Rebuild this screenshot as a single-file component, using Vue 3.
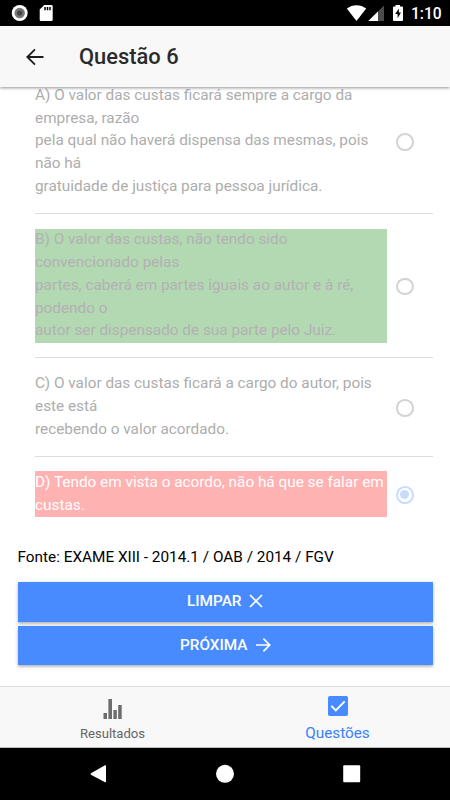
<script setup>
const options = [
  {
    id: 'a',
    text: 'A) O valor das custas ficará sempre a cargo da\nempresa, razão\npela qual não haverá dispensa das mesmas, pois\nnão há\ngratuidade de justiça para pessoa jurídica.',
  },
  {
    id: 'b',
    state: 'correct',
    text: 'B) O valor das custas, não tendo sido\nconvencionado pelas\npartes, caberá em partes iguais ao autor e à ré,\npodendo o\nautor ser dispensado de sua parte pelo Juiz.',
  },
  {
    id: 'c',
    text: 'C) O valor das custas ficará a cargo do autor, pois\neste está\nrecebendo o valor acordado.',
  },
  {
    id: 'd',
    state: 'wrong',
    checked: true,
    text: 'D) Tendo em vista o acordo, não há que se falar em\ncustas.',
  },
]
</script>

<template>
  <div class="screen">
    <div class="status">
      <svg class="status-left" width="60" height="26" viewBox="0 0 60 26">
        <circle cx="19.7" cy="13" r="8" fill="#fff" />
        <circle cx="19.7" cy="13" r="5.2" fill="#777" />
        <circle cx="19.7" cy="13" r="2.6" fill="#444" />
        <path d="M44.3 5H51.5Q52.7 5 52.7 6.2V19.8Q52.7 21 51.5 21H40.9Q39.7 21 39.7 19.8V9.6Z" fill="#fff" />
        <path d="M45 7V10.2M47.5 7V10.2M50 7V10.2" stroke="#000" stroke-width="1.5" />
      </svg>
      <svg class="status-right" width="62" height="26" viewBox="345 0 62 26">
        <path d="M346.8 8.6C352.6 4 360.4 4 366.2 8.6L356.5 21Z" fill="#fff" />
        <path d="M384 5.5V21H368.3Z" fill="#4c4c4c" />
        <path d="M378 11.5V21H368.3Z" fill="#fff" />
        <path d="M395.5 5H400V6.5H402Q403 6.5 403 7.5V20Q403 21 402 21H394Q393 21 393 20V7.5Q393 6.5 394 6.5H395.5Z" fill="#fff" />
        <path d="M398.8 8.4L395.2 14.1H397.6V18.2L401 12.5H398.8Z" fill="#000" />
      </svg>
      <span class="clock">1:10</span>
    </div>
    <header class="header">
      <svg class="back" width="18" height="18" viewBox="0 0 18 18">
        <path d="M17.5 9H1.5M9 1.3L1.3 9L9 16.7" fill="none" stroke="#1c1c1c" stroke-width="1.8" />
      </svg>
      <h1>Questão 6</h1>
    </header>
    <main class="content">
      <div class="options">
        <div v-for="option in options" :key="option.id" class="option">
          <div class="answer" :class="option.state"><div class="answer-text">{{ option.text }}</div></div>
          <span class="radio" :class="{ checked: option.checked }"></span>
        </div>
      </div>
      <p class="source">Fonte: EXAME XIII - 2014.1 / OAB / 2014 / FGV</p>
      <div class="actions">
        <button>
          <span>LIMPAR</span>
          <svg width="14" height="14" viewBox="0 0 14 14">
            <path d="M1 1L13 13M13 1L1 13" fill="none" stroke="#fff" stroke-width="1.7" />
          </svg>
        </button>
        <button>
          <span>PRÓXIMA</span>
          <svg width="15" height="14" viewBox="0 0 15 14">
            <path d="M0 7H14M7.4 .7L13.7 7L7.4 13.3" fill="none" stroke="#fff" stroke-width="1.7" />
          </svg>
        </button>
      </div>
    </main>
    <nav class="tabs">
      <div class="tab">
        <svg width="20" height="20" viewBox="0 0 20 20">
          <path d="M.5 14H4V20H.5ZM5.4 0H9V20H5.4ZM10.4 11H13.8V20H10.4ZM15.2 6H18.7V20H15.2Z" fill="#6c6c6c" />
        </svg>
        <span>Resultados</span>
      </div>
      <div class="tab active">
        <svg width="20" height="20" viewBox="0 0 20 20">
          <rect width="20" height="20" rx="1.8" fill="#488aff" />
          <path d="M3.3 9.9L7.8 14.4L16.7 5.4" fill="none" stroke="#fff" stroke-width="2" />
        </svg>
        <span>Questões</span>
      </div>
    </nav>
    <div class="system">
      <svg width="450" height="52" viewBox="0 0 450 52">
        <path d="M91 25.2L105 17.3Q106 17 106 18V33.5Q106 34.5 105 34.2L91 26.8Q90 26 91 25.2Z" fill="#fff" />
        <circle cx="225" cy="25.8" r="9" fill="#fff" />
        <rect x="343.2" y="17.3" width="17" height="17" rx="1" fill="#fff" />
      </svg>
    </div>
  </div>
</template>

<style>
body {
  margin: 0;
}
</style>

<style scoped>
.screen {
  width: 450px;
  height: 800px;
  display: flex;
  flex-direction: column;
  overflow: hidden;
  background: #fff;
  color: #000;
  font-family: Roboto, sans-serif;
}
svg {
  display: block;
  flex: none;
}
.status {
  height: 26px;
  flex: none;
  display: flex;
  align-items: center;
  background: #000;
  color: #fff;
}
.status-right {
  margin-left: auto;
}
.clock {
  width: 43px;
  padding: 1px 0 0 4px;
  box-sizing: border-box;
  font-size: 15.6px;
  font-weight: 500;
  line-height: 26px;
}
.header {
  height: 61px;
  flex: none;
  box-sizing: border-box;
  display: flex;
  align-items: center;
  gap: 35px;
  padding-left: 26px;
  background: #f8f8f8;
  box-shadow: 0 1px 3px rgba(0, 0, 0, 0.42);
  z-index: 1;
}
h1 {
  margin: 0;
  padding-top: 1px;
  font-size: 21.9px;
  font-weight: 500;
  line-height: 30px;
  color: #2b2b2b;
}
.content {
  flex: 1;
  min-height: 0;
  overflow: hidden;
  padding: 0 17px 0 17.5px;
}
.options {
  margin-top: -17.3px;
  padding-left: 17.5px;
}
.option {
  display: flex;
  align-items: center;
  padding: 14.7px 19.5px 14.2px 0;
  border-bottom: 1px solid #dedede;
}
.option:last-child {
  border-bottom-color: transparent;
}
.answer {
  width: 352px;
  color: #adadad;
}
.answer-text {
  margin-top: -0.7px;
  padding-bottom: 0.7px;
  font-size: 15.33px;
  line-height: 22.88px;
  white-space: pre;
}
.answer.correct {
  display: flow-root;
  background: #b2d9b2;
  color: #b4b0b4;
}
.answer.wrong {
  background: #ffb2b2;
  color: #fff;
}
.radio {
  width: 17.6px;
  height: 17.6px;
  box-sizing: border-box;
  margin: 1px 0 0 auto;
  border: 2.2px solid #d3d3d3;
  border-radius: 50%;
  display: flex;
  align-items: center;
  justify-content: center;
}
.radio.checked {
  border-color: #c8dcff;
}
.radio.checked::after {
  content: '';
  width: 8.8px;
  height: 8.8px;
  border-radius: 50%;
  background: #c8dcff;
}
.answer {
  display: flow-root;
}
.source {
  margin: 14px 0 0;
  font-size: 15.33px;
  line-height: 22px;
}
.actions {
  display: grid;
  gap: 4.6px;
  margin-top: 14px;
}
button {
  height: 39.2px;
  margin: 0;
  padding: 0 0 1.4px;
  border: 0;
  display: flex;
  align-items: center;
  justify-content: center;
  gap: 8px;
  background: #488aff;
  color: #fff;
  font-family: inherit;
  font-size: 15.33px;
  font-weight: 500;
  box-shadow: 0 2px 2px rgba(0, 0, 0, 0.14), 0 1px 4px rgba(0, 0, 0, 0.2);
}
.tabs {
  height: 62px;
  flex: none;
  box-sizing: border-box;
  display: grid;
  grid-template-columns: 1fr 1fr;
  background: #f8f8f8;
  border-top: 1px solid #dfdfdf;
  border-bottom: 1px solid #bbb;
}
.tab {
  display: flex;
  flex-direction: column;
  align-items: center;
  gap: 5px;
  padding-top: 12px;
  font-size: 13.1px;
  line-height: 20px;
  color: #666;
}
.tab.active {
  padding-top: 9.4px;
  gap: 6.6px;
  font-size: 15.3px;
  color: #3880ff;
}
.system {
  height: 52px;
  flex: none;
  background: #000;
}
</style>
